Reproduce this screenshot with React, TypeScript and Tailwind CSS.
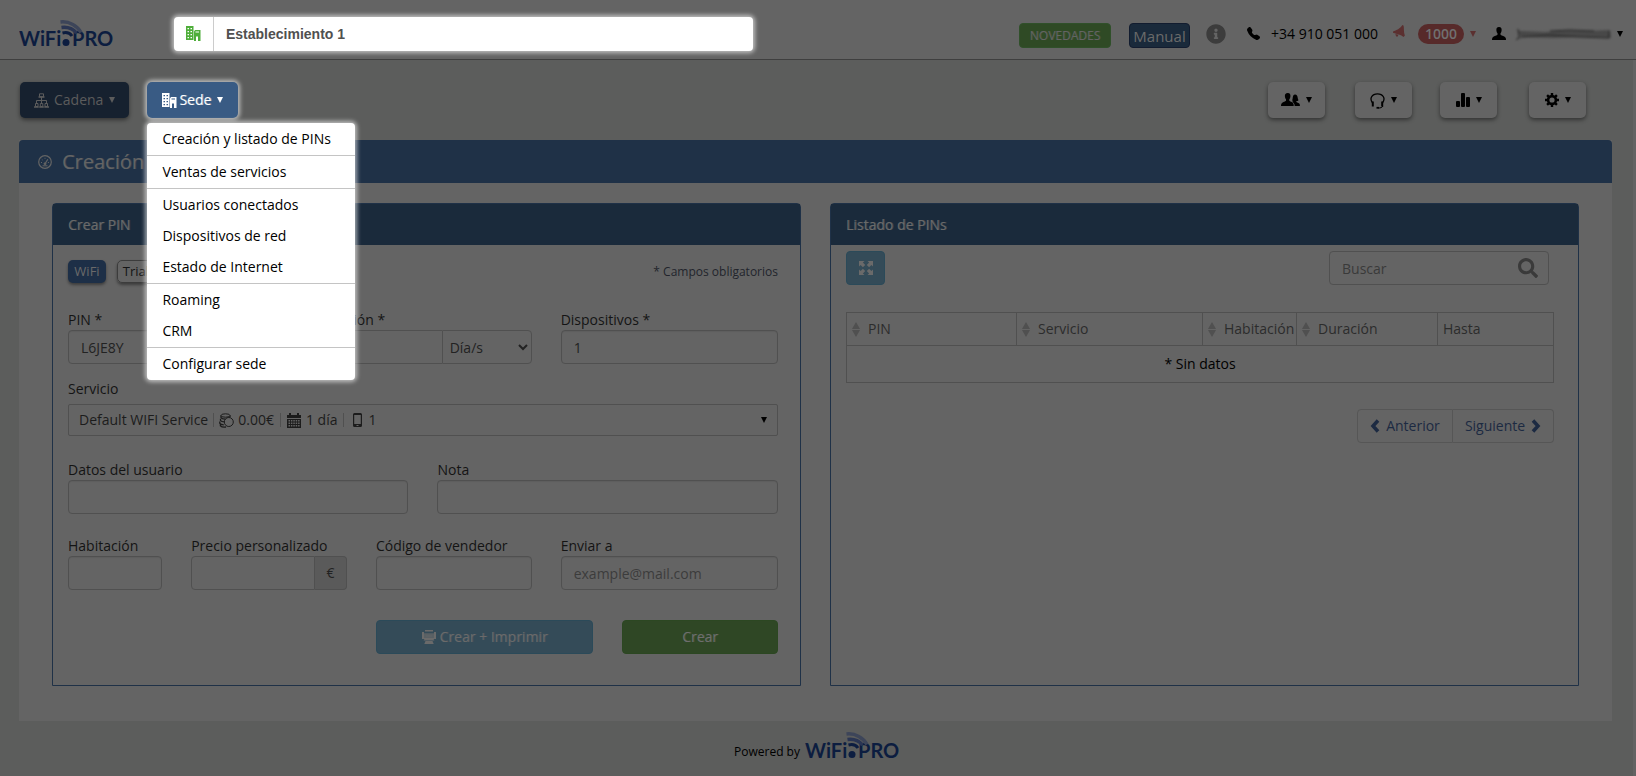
import type { ReactNode } from "react"
import { BsTelephoneFill } from "react-icons/bs"
import { FaInfoCircle, FaSearch } from "react-icons/fa"

const inputClass =
  "h-[34px] w-full min-w-0 rounded border border-[#505050] bg-[#646464] px-3 text-sm text-[#222222] shadow-[inset_0_1px_1px_rgba(0,0,0,0.06)] outline-none placeholder:text-[#3c3c3c]"

const Caret = ({ className = "" }: { className?: string }) => (
  <svg viewBox="0 0 6 6" className={`size-[6px] shrink-0 ${className}`} fill="currentColor" aria-hidden="true">
    <path d="M0 0h6L3 6z" />
  </svg>
)

const BuildingIcon = ({ className = "" }: { className?: string }) => (
  <svg viewBox="0 0 15 15" className={`size-[15px] shrink-0 ${className}`} fill="currentColor" aria-hidden="true">
    <path
      fillRule="evenodd"
      d="M0 0h7.5v14H0zM1.5 2v1.300h1.500V2zm3 0v1.300H6V2zM1.500 5v1.300h1.500V5zm3 0v1.300H6V5zM1.500 8v1.300h1.500V8zm3 0v1.300H6V8zM1.500 11v1.300h1.500V11zm3 0v1.300H6V11zM8 5.500L9 4h5.500v11H12v-4.500h-2V15H8zM9.500 5.500v1H13v-1z"
    />
  </svg>
)

const SitemapIcon = () => (
  <svg viewBox="0 0 15 15" className="size-[15px] shrink-0" fill="none" stroke="currentColor" aria-hidden="true">
    <path d="M7.500 4v7M2.500 11V7.500h10V11" />
    <path d="M5.500.8h4v3h-4zM1.500 10.500h2.500v3H1.500zM6.300 10.500h2.500v3H6.300zM11 10.500h2.500v3H11z" />
    <path d="M4.500 4h6M0 14h4.700M5.200 14h4.600M10.300 14H15" strokeWidth="1.300" />
  </svg>
)

const UserIcon = () => (
  <svg viewBox="0 0 14 13" className="h-[13px] w-[14px]" fill="currentColor" aria-hidden="true">
    <path d="M7 0c2.200 0 2.800 1.600 2.600 3.400C9.500 4.700 9.100 5.600 8.500 6.300v1.500c1.300.9 4.400 1.500 5.100 3 .4.700.4 1.500.4 2.200H0c0-.7 0-1.600.4-2.300.8-1.300 3.800-1.900 5.100-2.900V6.300c-.6-.7-1-1.600-1.100-2.900C4.200 1.600 4.800 0 7 0z" />
  </svg>
)

const UsersIcon = () => (
  <svg viewBox="0 0 19 14" className="h-[14px] w-[19px]" fill="currentColor" aria-hidden="true">
    <path d="M6.800 0C9 0 9.600 1.600 9.400 3.400c-.1 1.300-.5 2.200-1.100 2.900v1.500c1.300.9 3.700 1.500 4.200 3.200.2.800.2 1.700.2 2H0c0-.7 0-1.600.4-2.300.8-1.300 3.300-1.900 4.600-2.900V6.300c-.6-.7-1-1.600-1.100-2.900C3.700 1.600 4.600 0 6.800 0z" />
    <path d="M14 1.500c1.900 0 2.500 1.600 2.700 3.300.1 1.200.7 2 .7 2.400-.4.600-1.400.8-2 .9v1c1 .6 3.100 1 3.400 2.300.1.500.1 1.200.1 1.600h-5.200c0-2.700-1.700-3.500-3-4.200.9-.2 1.500-.6 1.600-.9-.6-.1-1-.3-1.200-.7.600-.9.500-1.900.7-2.900.2-1.600.9-2.800 2.200-2.800z" />
  </svg>
)

const HeadsetIcon = () => (
  <svg viewBox="0 0 15 16" className="mt-[2px] h-4 w-[15px]" fill="none" stroke="currentColor" aria-hidden="true">
    <path d="M2.600 10C-1 5.500 2 .8 7.500.8S16 5.500 12.400 10" strokeWidth="1.300" />
    <path d="M2.800 8.500v5M12.200 8.500v5" strokeWidth="2" />
    <path d="M13 13c-1 1.600-2.500 2-4.500 2" />
    <path d="M6.500 14.800h2.500" strokeWidth="1.800" />
  </svg>
)

const ChartIcon = () => (
  <svg viewBox="0 0 14 14" className="size-[14px]" fill="currentColor" aria-hidden="true">
    <rect x="0" y="8" width="4" height="6" rx="1" />
    <rect x="5" y="0" width="4" height="14" rx="1" />
    <rect x="10" y="4" width="4" height="10" rx="1" />
  </svg>
)

const CogIcon = () => (
  <svg viewBox="0 0 14 14" className="size-[14px]" fill="none" stroke="currentColor" aria-hidden="true">
    <circle cx="7" cy="7" r="3.900" strokeWidth="2.600" />
    <path
      d="M7 0v2.500M7 11.500V14M0 7h2.500M11.500 7H14M2.100 2.100l1.700 1.700M10.200 10.200l1.700 1.700M2.100 11.900l1.700-1.700M10.200 3.800l1.700-1.700"
      strokeWidth="2.400"
    />
  </svg>
)

const GaugeIcon = () => (
  <svg viewBox="0 0 14 14" className="size-[14px]" fill="none" stroke="currentColor" aria-hidden="true">
    <circle cx="7" cy="7" r="6.300" strokeWidth="1.200" />
    <path d="M3 7.500h1M3.800 4.300l.8.700M7 2.800v1M10.900 7.500h-1" />
    <path d="M7 8.800l2.800-4.600" strokeWidth="1.200" />
    <path d="M4.500 10.800h5" />
    <circle cx="7" cy="8.800" r="1" fill="currentColor" />
  </svg>
)

const HornIcon = () => (
  <svg viewBox="0 0 12 13" className="mt-[-4px] h-[13px] w-[12px]" fill="currentColor" aria-hidden="true">
    <path d="M9.500 0c1 .3 1.300 1 1.300 2.200l.2 4.300c.1 1.700.7 3 .8 4.200l-1.400 1.200C8.500 10.300 6 9.500 4 9L0 7.800V6.500C3 5.600 7.500 3.500 9.500 0z" />
    <path d="M2.500 9l2.800.8c-.2 1.200-.6 2-1.300 1.900-.9-.1-1.500-1.300-1.500-2.700z" />
  </svg>
)

const CoinsIcon = () => (
  <svg viewBox="0 0 15 15" className="size-[15px]" fill="none" stroke="currentColor" aria-hidden="true">
    <ellipse cx="6.500" cy="2.500" rx="4.500" ry="1.700" />
    <path
      d="M11 2.500v1.700M2 2.500v2c.5 1 2 1.600 4.500 1.600M1.500 5.800v1.700c.6.900 2 1.300 4 1.300M.8 8.400v2c.7.900 2 1.400 4 1.400M1.400 11v1.700c.9 1 3.300 1.600 5.600 1.300"
      strokeWidth="1.300"
    />
    <circle cx="9.800" cy="9" r="4.500" />
  </svg>
)

const CalendarIcon = () => (
  <svg viewBox="0 0 14 15" className="h-[15px] w-[14px]" fill="currentColor" aria-hidden="true">
    <path
      fillRule="evenodd"
      d="M0 2h2V0h2v2h6V0h2v2h2v3H0zM0 6h14v9H0zM1.500 7v1.500H3V7zm2.400 0v1.500h1.500V7zm2.400 0v1.500h1.500V7zm2.400 0v1.500h1.500V7zm2.400 0v1.500h1.500V7zM1.500 9.500V11H3V9.500zm2.400 0V11h1.500V9.500zm2.400 0V11h1.500V9.500zm2.400 0V11h1.500V9.500zm2.400 0V11h1.500V9.500zM1.500 12v1.500H3V12zm2.400 0v1.500h1.500V12zm2.400 0v1.500h1.500V12zm2.400 0v1.500h1.500V12zm2.400 0v1.500h1.500V12z"
    />
  </svg>
)

const PhoneIcon = () => (
  <svg viewBox="0 0 9 14" className="h-[14px] w-[9px]" fill="currentColor" aria-hidden="true">
    <path
      fillRule="evenodd"
      d="M1.500 0h6A1.500 1.500 0 0 1 9 1.500v11A1.500 1.500 0 0 1 7.500 14h-6A1.500 1.500 0 0 1 0 12.500v-11A1.500 1.500 0 0 1 1.500 0zM1.200 2v9h6.600V2zM3.500 12v1h2v-1z"
    />
  </svg>
)

const PrinterIcon = () => (
  <svg viewBox="0 0 14 14" className="size-[14px]" fill="currentColor" aria-hidden="true">
    <path
      fillRule="evenodd"
      d="M3 0h8v1.500H3zM0 2h2v1.500h10V2h2v7h-2.500l1 1.500H1.500l1-1.500H0zM2 4v4h10V4zM4.500 5.500h1v1h-1zM6.500 5.500h1v1h-1zM8.500 5.500h1v1h-1z"
    />
    <path d="M2 4h10v4H2z" opacity="0.700" />
    <path d="M3.500 11h7l1.200 3H2.300z" />
  </svg>
)

const ExpandIcon = () => (
  <svg viewBox="0 0 14 14" className="size-[14px]" fill="currentColor" aria-hidden="true">
    <path d="M0 0h5.500L3.900 1.600l2.300 2.300-2.300 2.300-2.300-2.300L0 5.500zM14 0v5.500l-1.600-1.600-2.300 2.300-2.300-2.300 2.300-2.300L8.500 0zM0 14V8.500l1.600 1.600 2.300-2.300 2.300 2.300-2.300 2.300L5.500 14zM14 14H8.500l1.600-1.600-2.300-2.300 2.300-2.300 2.300 2.300L14 8.500z" />
  </svg>
)

const ChevronIcon = ({ next = false }: { next?: boolean }) => (
  <svg viewBox="0 0 10 14" className="h-[14px] w-[10px]" fill="none" stroke="currentColor" strokeWidth="3.500" aria-hidden="true">
    <path d={next ? "M2 1.500L7 7l-5 5.500" : "M8 1.500L3 7l5 5.500"} />
  </svg>
)

const SortIcon = () => (
  <svg viewBox="0 0 8 15" className="h-[15px] w-[8px] shrink-0" fill="#505050" aria-hidden="true">
    <path d="M4 0l4 7H0zM0 8h8l-4 7z" />
  </svg>
)

const Logo = () => (
  <svg viewBox="0 0 94 30" className="h-[30px] w-[94px] shrink-0" role="img" aria-label="WiFi PRO">
    <g fill="#0c1d40" fontFamily="Lato, sans-serif" fontWeight="700" fontSize="20">
      <text x="0" y="27">WiFi</text>
      <text x="53" y="27">PRO</text>
    </g>
    <circle cx="47" cy="23.500" r="3.500" fill="#0c1d40" />
    <g fill="none">
      <path d="M41.500 3c9-1 17 4 20.500 10.500" stroke="#3d4559" strokeWidth="3.500" />
      <path d="M42.500 8.500c7-1 11.500 1.500 15 5.500" stroke="#2a3553" strokeWidth="3.500" />
      <path d="M43.500 14c4-1 7.500 0 9.500 3" stroke="#0c1d40" strokeWidth="3" />
    </g>
  </svg>
)

const Field = ({ id, label, className, children }: { id: string; label: string; className: string; children: ReactNode }) => (
  <div className={className}>
    <label htmlFor={id} className="block text-sm text-[#141414]">
      {label}
    </label>
    {children}
  </div>
)

const Header = () => (
  <header className="flex h-[60px] items-center border-b border-[#3f3f3f] bg-[#646464] pr-[13px] pl-[19px]">
    <div className="pt-2">
      <Logo />
    </div>
    <div className="mt-2 ml-[61px] flex h-[34px] w-[579px] items-center rounded bg-white shadow-[0_0_4px_2px_rgba(255,255,255,0.6)]">
      <span className="flex h-full w-10 items-center justify-center border-r border-[#cccccc] text-[#4fae3a]">
        <BuildingIcon />
      </span>
      <input
        aria-label="Establecimiento"
        defaultValue="Establecimiento 1"
        className="h-full min-w-0 flex-1 bg-transparent px-3 font-['Liberation_Sans',sans-serif] text-sm font-bold text-[#505050] outline-none"
      />
    </div>
    <div className="mt-2 ml-auto flex items-center">
      <button className="mt-1 h-[25px] w-[92px] rounded border border-[#30502a] bg-[#2f4a25] text-xs text-[#646464] text-shadow-[1px_0_0_rgba(100,100,100,0.4)]">
        NOVEDADES
      </button>
      <button className="mt-1 ml-[18px] h-[25px] w-[61px] rounded border border-[#121c2f] bg-[#1a2a3b] text-[15px] leading-6 text-[#6a6a6a]">
        Manual
      </button>
      <FaInfoCircle className="ml-4 size-5 text-[#3c3c3c]" />
      <BsTelephoneFill className="ml-[21px] size-[13px] text-black" />
      <a href="tel:+34910051000" className="ml-[11px] text-sm text-black">
        +34 910 051 000
      </a>
      <button className="ml-[15px] flex items-center text-[#5b3030]" aria-label="Avisos">
        <HornIcon />
        <span className="ml-[13px] flex h-5 w-[46px] items-center justify-center rounded-full bg-[#572a2a] text-sm font-semibold text-[#707070]">
          1000
        </span>
        <Caret className="ml-[6px]" />
      </button>
      <button className="ml-4 flex items-center text-black" aria-label="Cuenta">
        <UserIcon />
        <svg viewBox="0 0 98 14" className="ml-2 h-[14px] w-[98px] blur-[1px]" aria-hidden="true">
          <path d="M3 2l3 2 25 1 22-2 20 1 23-1 1 8-30-1-28 1-30-1-6 3 3-4z" fill="#484848" />
          <path d="M4 2l1 8-3 3M8 10l28-2 30 2 29 1V4M36 4l20-1 24 1" fill="none" stroke="#262626" strokeWidth="1" />
        </svg>
        <Caret className="ml-[5px]" />
      </button>
    </div>
  </header>
)

const menuGroups = [
  ["Creación y listado de PINs"],
  ["Ventas de servicios"],
  ["Usuarios conectados", "Dispositivos de red", "Estado de Internet"],
  ["Roaming", "CRM"],
  ["Configurar sede"],
]

const ToolButton = ({ label, children }: { label: string; children: ReactNode }) => (
  <button
    aria-label={label}
    className="flex h-9 w-[57px] items-center justify-center gap-[6px] rounded-[5px] bg-[#646464] text-black shadow-[0_2px_4px_rgba(0,0,0,0.45)]"
  >
    {children}
    <Caret />
  </button>
)

const Toolbar = () => (
  <nav className="flex items-center py-[22px] pr-[47px] pl-5">
    <button className="flex h-9 items-center rounded-[5px] bg-[#16212f] px-[14px] text-sm text-[#5c5c5c] shadow-[0_2px_4px_rgba(0,0,0,0.45)]">
      <SitemapIcon />
      <span className="ml-[5px]">Cadena</span>
      <Caret className="ml-[6px]" />
    </button>
    <div className="relative ml-[18px]">
      <button className="flex h-9 items-center rounded-[5px] bg-[#395b84] px-[15px] text-sm text-white shadow-[0_0_4px_2px_rgba(255,255,255,0.6)] text-shadow-[1px_0_0_rgba(255,255,255,0.35)]">
        <BuildingIcon />
        <span className="ml-[2px]">Sede</span>
        <Caret className="ml-[6px]" />
      </button>
      <div className="absolute top-full left-0 z-10 mt-[5px] w-[208px] rounded-sm bg-white pt-px shadow-[0_0_4px_2px_rgba(255,255,255,0.6)]">
        {menuGroups.map((group) => (
          <ul key={group[0]} className="mb-px border-b border-[#c4c4c4] last:mb-0 last:border-b-0">
            {group.map((item) => (
              <li key={item}>
                <a href="#" className="flex h-[31px] items-center px-[15px] pb-[2px] text-sm text-black">
                  {item}
                </a>
              </li>
            ))}
          </ul>
        ))}
      </div>
    </div>
    <div className="ml-auto flex items-center">
      <ToolButton label="Usuarios">
        <UsersIcon />
      </ToolButton>
      <div className="ml-[30px]">
        <ToolButton label="Soporte">
          <HeadsetIcon />
        </ToolButton>
      </div>
      <div className="ml-7">
        <ToolButton label="Estadísticas">
          <ChartIcon />
        </ToolButton>
      </div>
      <div className="ml-8">
        <ToolButton label="Configuración">
          <CogIcon />
        </ToolButton>
      </div>
    </div>
  </nav>
)

const Panel = ({ title, children }: { title: string; children: ReactNode }) => (
  <section className="flex min-w-0 flex-1 flex-col rounded-t border border-[#1f3147] bg-[#646464]">
    <h2 className="flex h-[41px] items-center bg-[#1a2a3b] px-[15px] text-sm text-[#6a6a6a] text-shadow-[1px_0_0_rgba(106,106,106,0.5)]">
      {title}
    </h2>
    {children}
  </section>
)

const CreatePin = () => (
  <Panel title="Crear PIN">
    <form className="pt-[15px] pr-[22px] pb-[31px] pl-[15px]" onSubmit={(e) => e.preventDefault()}>
      <div className="flex items-center">
        <button
          type="button"
          className="h-[23px] w-[38px] rounded-[5px] bg-[#1d2f47] text-[13px] leading-none text-[#6a6a6a] shadow-[0_2px_3px_rgba(0,0,0,0.4)]"
        >
          WiFi
        </button>
        <button
          type="button"
          className="ml-[11px] h-[23px] w-[38px] rounded-[5px] border border-[#3c3c3c] text-[13px] leading-none text-[#141414] shadow-[0_2px_3px_rgba(0,0,0,0.4)]"
        >
          Trial
        </button>
        <span className="ml-auto text-xs text-[#22242c]">* Campos obligatorios</span>
      </div>
      <div className="mt-[27px] grid grid-cols-12 gap-x-[29px]">
        <Field id="pin" label="PIN *" className="col-span-4">
          <input id="pin" defaultValue="L6JE8Y" className={inputClass} />
        </Field>
        <Field id="duracion" label="Duración *" className="col-span-4">
          <div className="flex">
            <input
              id="duracion"
              defaultValue="1"
              className="h-[34px] min-w-0 flex-1 rounded-l border border-r-0 border-[#505050] bg-[#646464] px-3 text-sm text-[#222222] outline-none"
            />
            <select
              aria-label="Unidad"
              className="h-[34px] w-[90px] rounded-r border border-[#505050] bg-[#646464] px-[3px] text-sm text-[#222222] outline-none"
            >
              <option>Día/s</option>
            </select>
          </div>
        </Field>
        <Field id="dispositivos" label="Dispositivos *" className="col-span-4">
          <input id="dispositivos" defaultValue="1" className={inputClass} />
        </Field>

        <Field id="servicio" label="Servicio" className="col-span-12 mt-[15px]">
          <button
            id="servicio"
            type="button"
            aria-haspopup="listbox"
            className="mt-[5px] flex h-8 w-full items-center rounded-xs border border-[#505050] px-[10px] text-sm text-[#1c1c1c]"
          >
            Default WIFI Service
            <i className="mx-[5px] h-[14px] w-px bg-[#505050]" />
            <CoinsIcon />
            <span className="ml-1">0.00€</span>
            <i className="mx-[6px] h-[14px] w-px bg-[#505050]" />
            <CalendarIcon />
            <span className="ml-[5px]">1 día</span>
            <i className="mx-[6px] h-[14px] w-px bg-[#505050]" />
            <span className="ml-[3px]">
              <PhoneIcon />
            </span>
            <span className="ml-[6px]">1</span>
            <Caret className="ml-auto text-black" />
          </button>
        </Field>

        <Field id="datos" label="Datos del usuario" className="col-span-6 mt-6">
          <input id="datos" className={inputClass} />
        </Field>
        <Field id="nota" label="Nota" className="col-span-6 mt-6">
          <input id="nota" className={inputClass} />
        </Field>

        <Field id="habitacion" label="Habitación" className="col-span-2 mt-[22px]">
          <input id="habitacion" className={inputClass} />
        </Field>
        <Field id="precio" label="Precio personalizado" className="col-span-3 mt-[22px]">
          <div className="flex">
            <input
              id="precio"
              className="h-[34px] min-w-0 flex-1 rounded-l border border-[#505050] bg-[#646464] px-3 text-sm outline-none"
            />
            <span className="flex w-8 items-center justify-center rounded-r border border-l-0 border-[#505050] bg-[#5a5a5a] text-sm text-[#222222]">
              €
            </span>
          </div>
        </Field>
        <Field id="vendedor" label="Código de vendedor" className="col-span-3 mt-[22px]">
          <input id="vendedor" className={inputClass} />
        </Field>
        <Field id="enviar" label="Enviar a" className="col-span-4 mt-[22px]">
          <input id="enviar" type="email" placeholder="example@mail.com" className={inputClass} />
        </Field>

        <button
          type="button"
          className="col-span-4 col-start-6 mt-[30px] flex h-[34px] items-center justify-center gap-1 rounded border border-[#2b4a59] bg-[#344b58] text-sm text-[#6a6a6a] text-shadow-[1px_0_0_rgba(106,106,106,0.4)]"
        >
          <PrinterIcon />
          Crear + Imprimir
        </button>
        <button
          type="submit"
          className="col-span-3 mt-[30px] h-[34px] rounded border border-[#2c4722] bg-[#2f4725] text-sm text-[#6e6e6e] text-shadow-[1px_0_0_rgba(110,110,110,0.4)]"
        >
          Crear
        </button>
      </div>
    </form>
  </Panel>
)

const columns = [
  { name: "PIN", width: "w-[170px]", sortable: true },
  { name: "Servicio", width: "w-[186px]", sortable: true },
  { name: "Habitación", width: "w-[94px]", sortable: true },
  { name: "Duración", width: "w-[141px]", sortable: true },
  { name: "Hasta", width: "", sortable: false },
]

const PinList = () => (
  <Panel title="Listado de PINs">
    <div className="pt-[6px] pr-6 pl-[15px]">
      <div className="flex items-center justify-between pr-[5px]">
        <button
          aria-label="Expandir"
          className="flex h-[34px] w-[39px] items-center justify-center rounded border border-[#2b4a59] bg-[#344b58] text-[#6a6a6a]"
        >
          <ExpandIcon />
        </button>
        <div className="flex h-[34px] w-[220px] items-center rounded border border-[#505050] pr-[10px] pl-3">
          <input
            type="search"
            aria-label="Buscar"
            placeholder="Buscar"
            className="h-full min-w-0 flex-1 bg-transparent text-sm outline-none placeholder:text-[#3a3a3a]"
          />
          <FaSearch className="size-5 text-[#3a3a3a]" />
        </div>
      </div>
      <table className="mt-[27px] w-full table-fixed border-collapse border border-[#505050] text-sm">
        <thead>
          <tr className="h-[33px]">
            {columns.map((column) => (
              <th
                key={column.name}
                className={`border border-[#505050] px-[5px] py-0 text-left font-normal text-[#2c2c2c] ${column.width}`}
              >
                <span className="flex items-center gap-2">
                  {column.sortable && <SortIcon />}
                  {column.name}
                </span>
              </th>
            ))}
          </tr>
        </thead>
        <tbody>
          <tr className="h-[37px]">
            <td colSpan={5} className="py-0 text-center text-black">
              * Sin datos
            </td>
          </tr>
        </tbody>
      </table>
      <div className="mt-[26px] flex justify-end text-sm text-[#1c2a42]">
        <button className="flex h-[34px] w-[96px] items-center justify-center gap-[6px] rounded-l border border-[#565656]">
          <ChevronIcon />
          Anterior
        </button>
        <button className="flex h-[34px] w-[101px] items-center justify-center gap-[6px] rounded-r border border-l-0 border-[#565656]">
          Siguiente
          <ChevronIcon next />
        </button>
      </div>
    </div>
  </Panel>
)

export default function App() {
  return (
    <div className="flex min-h-screen flex-col bg-[#5c5d5c] font-['Open_Sans',sans-serif] leading-5">
      <Header />
      <div className="flex flex-1 flex-col border-r-[3px] border-[#636363]">
        <Toolbar />
        <main className="mr-[21px] ml-[19px] bg-[#646464]">
          <h1 className="flex h-[43px] items-center rounded-t bg-[#1f3147] pl-[19px] text-xl text-[#646464] text-shadow-[1px_0_0_rgba(100,100,100,0.4)]">
            <GaugeIcon />
            <span className="ml-[10px]">Creación</span>
          </h1>
          <div className="flex gap-[29px] px-[33px] pt-5 pb-[35px]">
            <CreatePin />
            <PinList />
          </div>
        </main>
        <footer className="flex items-center justify-center gap-[5px] pt-[10px] text-xs text-black">
          <span className="pt-3">Powered by</span>
          <Logo />
        </footer>
      </div>
    </div>
  )
}
